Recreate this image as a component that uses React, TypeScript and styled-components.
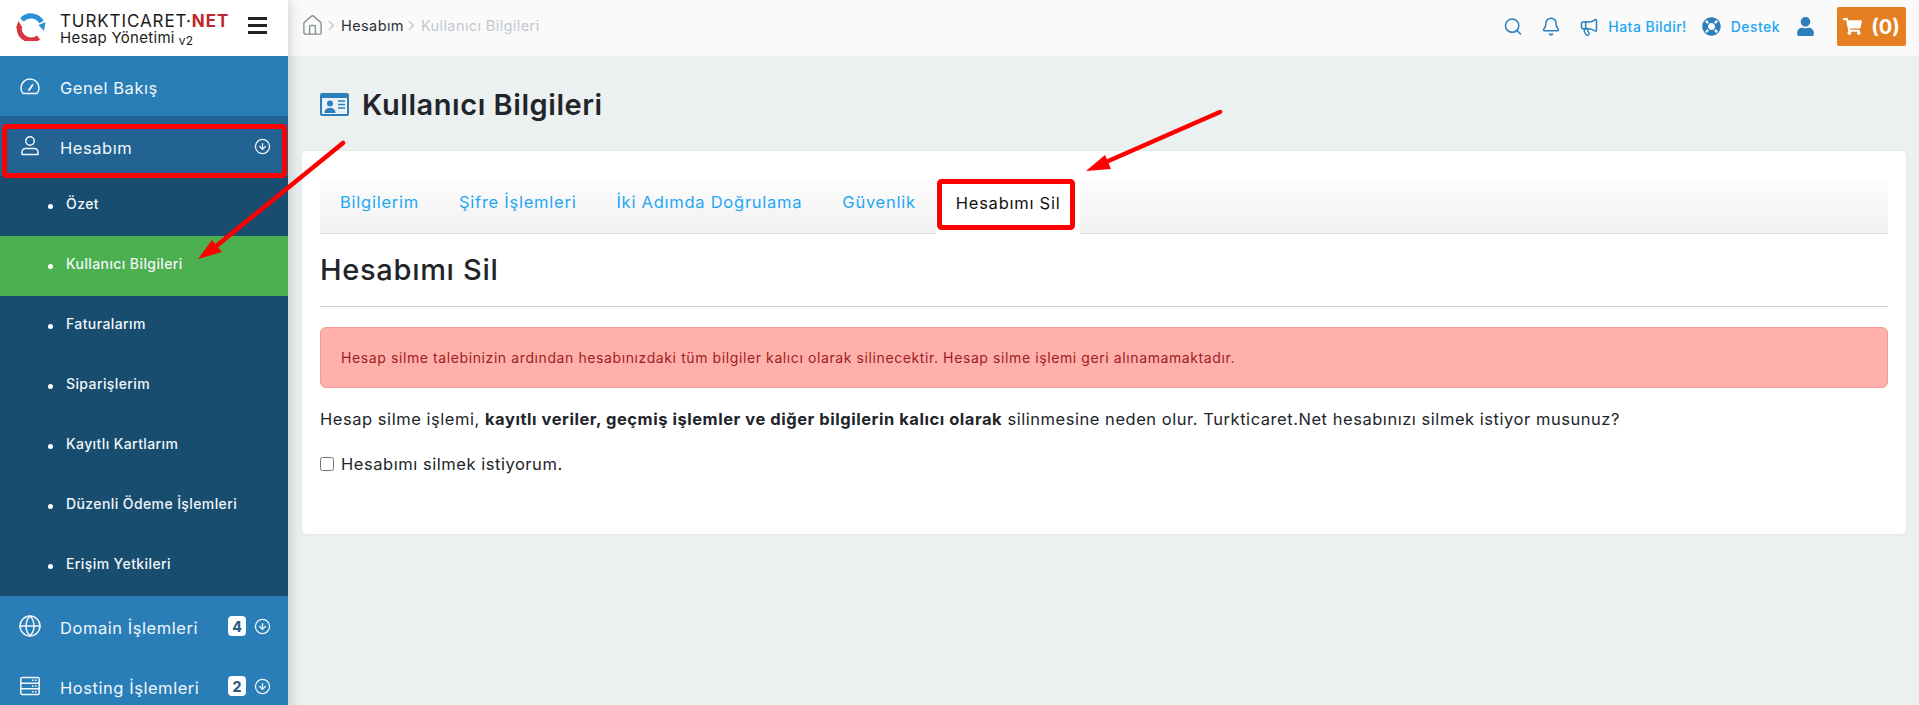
import React from 'react';
import styled, { createGlobalStyle } from 'styled-components';
import { CircleArrowDown, ChevronRight, Globe, Search, Bell, Megaphone, House } from 'lucide-react';
import { FaShoppingCart, FaUser, FaLifeRing } from 'react-icons/fa';

const GlobalStyle = createGlobalStyle`
    html, body {
        margin: 0;
        padding: 0;
        height: 100%;
        overflow: hidden;
        background: #ebf0f0;
        font-family: Inter, 'Noto Sans', sans-serif;
        color: #212529;
    }
    * {
        box-sizing: border-box;
    }
`;

const Page = styled.div`
    position: relative;
    display: grid;
    grid-template-columns: 288px 1fr;
    width: 100%;
    height: 705px;
    overflow: hidden;
`;

const Sidebar = styled.aside`
    display: flex;
    flex-direction: column;
    background: #2a7eb8;
    box-shadow: 0 0 14px rgba(0, 0, 0, .22);
    z-index: 1;
`;

const Brand = styled.div`
    display: flex;
    align-items: center;
    height: 56px;
    padding: 0 21px 0 16px;
    background: #fff;
`;

const LogoMark = styled.svg`
    flex: none;
    margin-bottom: 2px;
`;

const BrandText = styled.div`
    display: flex;
    flex-direction: column;
    gap: 1px;
    margin: 6px 0 0 14px;
    color: #1c1c1c;
`;

const BrandName = styled.div`
    font-size: 17px;
    line-height: 15px;
    letter-spacing: .9px;
    white-space: nowrap;

    b {
        color: #c1272d;
        font-weight: 700;
    }
`;

const BrandSub = styled.div`
    font-size: 15px;
    line-height: 15px;
    letter-spacing: .3px;
    white-space: nowrap;

    small {
        font-size: 12px;
        margin-left: 4px;
        vertical-align: -2px;
    }
`;

const Burger = styled.div`
    display: flex;
    flex-direction: column;
    gap: 4px;
    width: 19px;
    margin: 0 0 5px auto;

    span {
        height: 3px;
        background: #222;
    }
`;

const NavItem = styled.div<{ $active?: boolean }>`
    display: flex;
    align-items: center;
    flex: none;
    height: 60px;
    padding: 0 17px 0 20px;
    color: #f1f6fa;
    font-size: 16.5px;
    letter-spacing: .55px;
    background: ${p => (p.$active ? '#236394' : 'transparent')};

    > span {
        margin-left: 20px;
        padding-top: 4px;
        flex: 1;
        white-space: nowrap;
    }

    > svg {
        flex: none;
    }
`;

const GlobeIcon = styled(Globe)`
    margin: 0 -2px;
`;

const SubList = styled.div`
    display: flex;
    flex-direction: column;
    flex: none;
    background: #194d70;
`;

const SubItem = styled.div<{ $active?: boolean }>`
    display: flex;
    align-items: center;
    height: 60px;
    padding-left: 48px;
    gap: 13px;
    font-size: 14px;
    font-weight: 500;
    letter-spacing: .4px;
    color: #f2f6f9;
    background: ${p => (p.$active ? '#4caf50' : 'transparent')};

    &::before {
        content: '';
        width: 5px;
        height: 5px;
        border-radius: 50%;
        background: #fff;
    }

    span {
        padding-bottom: 6px;
    }
`;

const Badge = styled.i`
    display: flex;
    align-items: center;
    justify-content: center;
    width: 18px;
    height: 20px;
    margin-right: 8px;
    border-radius: 4px;
    background: #fff;
    color: #2d5f86;
    font-size: 14px;
    font-weight: 800;
    font-style: normal;
    letter-spacing: 0;
`;

const Main = styled.main`
    display: flex;
    flex-direction: column;
    min-width: 0;
`;

const Topbar = styled.header`
    display: flex;
    align-items: center;
    justify-content: space-between;
    height: 56px;
    padding: 0 13px 3px 12px;
    background: #fafafa;
`;

const Crumbs = styled.nav`
    display: flex;
    align-items: center;
    padding-bottom: 3px;
    font-size: 14.5px;
    letter-spacing: .4px;
    color: #2b3238;
`;

const CrumbHome = styled(House)`
    margin-left: 1px;
    color: #8a9499;
`;

const CrumbSep = styled(ChevronRight)`
    margin-right: 2px;
    color: #c4c8cc;
`;

const CrumbCurrent = styled.span`
    color: #c4c8d0;
`;

const Actions = styled.div`
    display: flex;
    align-items: center;
    color: #2b7fba;
`;

const ActionIcon = styled.span<{ $left?: number }>`
    display: flex;
    align-items: center;
    justify-content: center;
    width: 20px;
    margin-left: ${p => p.$left ?? 0}px;
`;

const ActionLink = styled.span`
    color: #1ea7f2;
    font-size: 14px;
    font-weight: 500;
    letter-spacing: .45px;
    margin-left: 9px;
`;

const Cart = styled.div`
    display: flex;
    align-items: center;
    justify-content: center;
    gap: 9px;
    width: 69px;
    height: 39px;
    margin-left: 22px;
    border-radius: 2px;
    background: #e67e22;
    color: #fff;
    font-size: 20px;
    font-weight: 700;
`;

const Content = styled.div`
    display: flex;
    flex-direction: column;
    padding: 0 13px 0 14px;
`;

const PageTitle = styled.h1`
    display: flex;
    align-items: center;
    gap: 13px;
    height: 95px;
    margin: 0;
    padding: 2px 0 0 18px;
    font-size: 29px;
    font-weight: 600;
    letter-spacing: .55px;
    color: #212529;
`;

const Card = styled.section`
    display: flex;
    flex-direction: column;
    height: 383px;
    padding: 28px 18px 0;
    background: #fff;
    border-radius: 5px;
    box-shadow: 0 0 4px rgba(0, 0, 0, .06);
`;

const Tabs = styled.div`
    display: flex;
    height: 55px;
    background: linear-gradient(#fdfdfd, #f1f1f2);
    border-bottom: 1px solid #dee2e6;
`;

const Tab = styled.div<{ $active?: boolean }>`
    display: flex;
    align-items: center;
    padding: 0 20px 8px;
    height: ${p => (p.$active ? '55px' : '54px')};
    font-size: 16.5px;
    letter-spacing: .75px;
    font-weight: 400;
    color: ${p => (p.$active ? '#111' : '#1ea7f2')};
    background: ${p => (p.$active ? '#fff' : 'transparent')};
`;

const Heading = styled.h2`
    margin: 0;
    padding-top: 18px;
    height: 73px;
    border-bottom: 1px solid #ccc;
    font-size: 29px;
    line-height: 36px;
    letter-spacing: .7px;
    font-weight: 500;
    color: #212529;
`;

const Alert = styled.div`
    display: flex;
    align-items: center;
    height: 61px;
    margin-top: 20px;
    padding: 0 20px;
    border: 1px solid #f59a96;
    border-radius: 6px;
    background: #ffb0ab;
    color: #a01c22;
    font-size: 14px;
    letter-spacing: .6px;
`;

const Paragraph = styled.p`
    margin: 19px 0 0;
    font-size: 16.5px;
    letter-spacing: .54px;
    line-height: 24px;
    color: #212529;
`;

const CheckRow = styled.label`
    display: flex;
    align-items: center;
    gap: 7px;
    margin-top: 21px;
    font-size: 16.5px;
    letter-spacing: .54px;
    line-height: 24px;

    input {
        width: 14px;
        height: 14px;
        margin: 0;
    }
`;

const Annotations = styled.svg`
    position: absolute;
    left: 0;
    top: 0;
    z-index: 5;
    pointer-events: none;
`;

const arrowDown = <CircleArrowDown size={17} strokeWidth={1.8} />;

const subItems = ['Özet', 'Kullanıcı Bilgileri', 'Faturalarım', 'Siparişlerim', 'Kayıtlı Kartlarım', 'Düzenli Ödeme İşlemleri', 'Erişim Yetkileri'];

const Logo = () => (
    <LogoMark width="30" height="28" viewBox="0 0 30 28">
        <path d="M6 7A12 12 0 0 1 25.500 9" fill="none" stroke="#2b8fd6" strokeWidth="5" />
        <polygon points="22.500,12 29.500,9 28,18" fill="#2b8fd6" />
        <path d="M22.500 24.500A12 12 0 0 1 3.200 15" fill="none" stroke="#d9333f" strokeWidth="5" />
        <polygon points="0,15 6.500,15 2.500,8" fill="#d9333f" />
    </LogoMark>
);

const GaugeIcon = () => (
    <svg width="20" height="20" viewBox="0 0 20 20" fill="none" stroke="currentColor" strokeWidth="1.5" strokeLinecap="round" strokeLinejoin="round">
        <path d="M3 17.500h14c1-1.200 2-3 2-5.500a9 9 0 0 0-18 0c0 2.500 1 4.300 2 5.500z" />
        <path d="M9 14l3.500-5" strokeWidth="2" />
    </svg>
);

const UserIcon = () => (
    <svg width="20" height="20" viewBox="0 0 20 20" fill="none" stroke="currentColor" strokeWidth="1.5" strokeLinejoin="round">
        <circle cx="10" cy="5" r="4.200" />
        <path d="M2 18.500v-2.500a3.500 3.500 0 0 1 3.500-3.500h9a3.500 3.500 0 0 1 3.500 3.500v2.500z" />
    </svg>
);

const ServerIcon = () => (
    <svg width="20" height="20" viewBox="0 0 20 20" fill="none" stroke="currentColor" strokeWidth="1.5">
        <rect x=".8" y="1.500" width="18.400" height="17" rx="1.500" />
        <path d="M1 7.200h18M1 12.800h18M12 4.300h1.500M15 4.300h1.500M12 10h1.500M15 10h1.500M12 15.700h1.500M15 15.700h1.500" />
    </svg>
);

const IdCardIcon = () => (
    <svg width="29" height="23" viewBox="0 0 29 23">
        <rect width="29" height="23" rx="2" fill="#2b7fba" />
        <rect x="2" y="5" width="25" height="16" fill="#eaf2f7" />
        <circle cx="10" cy="10.500" r="3" fill="#2b7fba" />
        <path d="M4.500 20c0-3.500 2-5 5.500-5s5.500 1.500 5.500 5z" fill="#2b7fba" />
        <path d="M18 8h7M18 11.500h7M18 15h7" stroke="#2b7fba" strokeWidth="1.500" />
    </svg>
);

const App: React.FC = () => (
    <Page>
        <GlobalStyle />
        <Sidebar>
            <Brand>
                <Logo />
                <BrandText>
                    <BrandName>TURKTICARET·<b>NET</b></BrandName>
                    <BrandSub>Hesap Yönetimi<small>v2</small></BrandSub>
                </BrandText>
                <Burger><span /><span /><span /></Burger>
            </Brand>
            <NavItem><GaugeIcon /><span>Genel Bakış</span></NavItem>
            <NavItem $active><UserIcon /><span>Hesabım</span>{arrowDown}</NavItem>
            <SubList>
                {subItems.map((s, i) => <SubItem key={s} $active={i === 1}><span>{s}</span></SubItem>)}
            </SubList>
            <NavItem><GlobeIcon size={24} strokeWidth={1.5} /><span>Domain İşlemleri</span><Badge>4</Badge>{arrowDown}</NavItem>
            <NavItem><ServerIcon /><span>Hosting İşlemleri</span><Badge>2</Badge>{arrowDown}</NavItem>
        </Sidebar>
        <Main>
            <Topbar>
                <Crumbs>
                    <CrumbHome size={23} strokeWidth={1.5} />
                    <CrumbSep size={15} strokeWidth={2.5} />
                    Hesabım
                    <CrumbSep size={15} strokeWidth={2.5} />
                    <CrumbCurrent>Kullanıcı Bilgileri</CrumbCurrent>
                </Crumbs>
                <Actions>
                    <ActionIcon><Search size={23} strokeWidth={1.8} /></ActionIcon>
                    <ActionIcon $left={18}><Bell size={21} strokeWidth={1.8} /></ActionIcon>
                    <ActionIcon $left={18}><Megaphone size={22} strokeWidth={1.8} /></ActionIcon>
                    <ActionLink>Hata Bildir!</ActionLink>
                    <ActionIcon $left={15}><FaLifeRing size={19} /></ActionIcon>
                    <ActionLink>Destek</ActionLink>
                    <ActionIcon $left={15}><FaUser size={19} /></ActionIcon>
                    <Cart><FaShoppingCart size={19} />(0)</Cart>
                </Actions>
            </Topbar>
            <Content>
                <PageTitle><IdCardIcon />Kullanıcı Bilgileri</PageTitle>
                <Card>
                    <Tabs>
                        <Tab>Bilgilerim</Tab>
                        <Tab>Şifre İşlemleri</Tab>
                        <Tab>İki Adımda Doğrulama</Tab>
                        <Tab>Güvenlik</Tab>
                        <Tab $active>Hesabımı Sil</Tab>
                    </Tabs>
                    <Heading>Hesabımı Sil</Heading>
                    <Alert>Hesap silme talebinizin ardından hesabınızdaki tüm bilgiler kalıcı olarak silinecektir. Hesap silme işlemi geri alınamamaktadır.</Alert>
                    <Paragraph>Hesap silme işlemi, <b>kayıtlı veriler, geçmiş işlemler ve diğer bilgilerin kalıcı olarak</b> silinmesine neden olur. Turkticaret.Net hesabınızı silmek istiyor musunuz?</Paragraph>
                    <CheckRow><input type="checkbox" />Hesabımı silmek istiyorum.</CheckRow>
                </Card>
            </Content>
        </Main>
        <Annotations width="1919" height="705" viewBox="0 0 1919 705">
            <rect x="4.5" y="126.5" width="280" height="49" rx="2" fill="none" stroke="#f00" strokeWidth="5" />
            <rect x="939.5" y="181.5" width="133" height="46" rx="2" fill="none" stroke="#f00" strokeWidth="5" />
            <line x1="343" y1="143" x2="215" y2="247" stroke="#f00" strokeWidth="4.5" strokeLinecap="round" />
            <polygon points="198,259 212,240 222,252" fill="#f00" />
            <line x1="1220" y1="112" x2="1106" y2="162" stroke="#f00" strokeWidth="4.5" strokeLinecap="round" />
            <polygon points="1086,171 1105,155 1111,169" fill="#f00" />
        </Annotations>
    </Page>
);

export default App;
